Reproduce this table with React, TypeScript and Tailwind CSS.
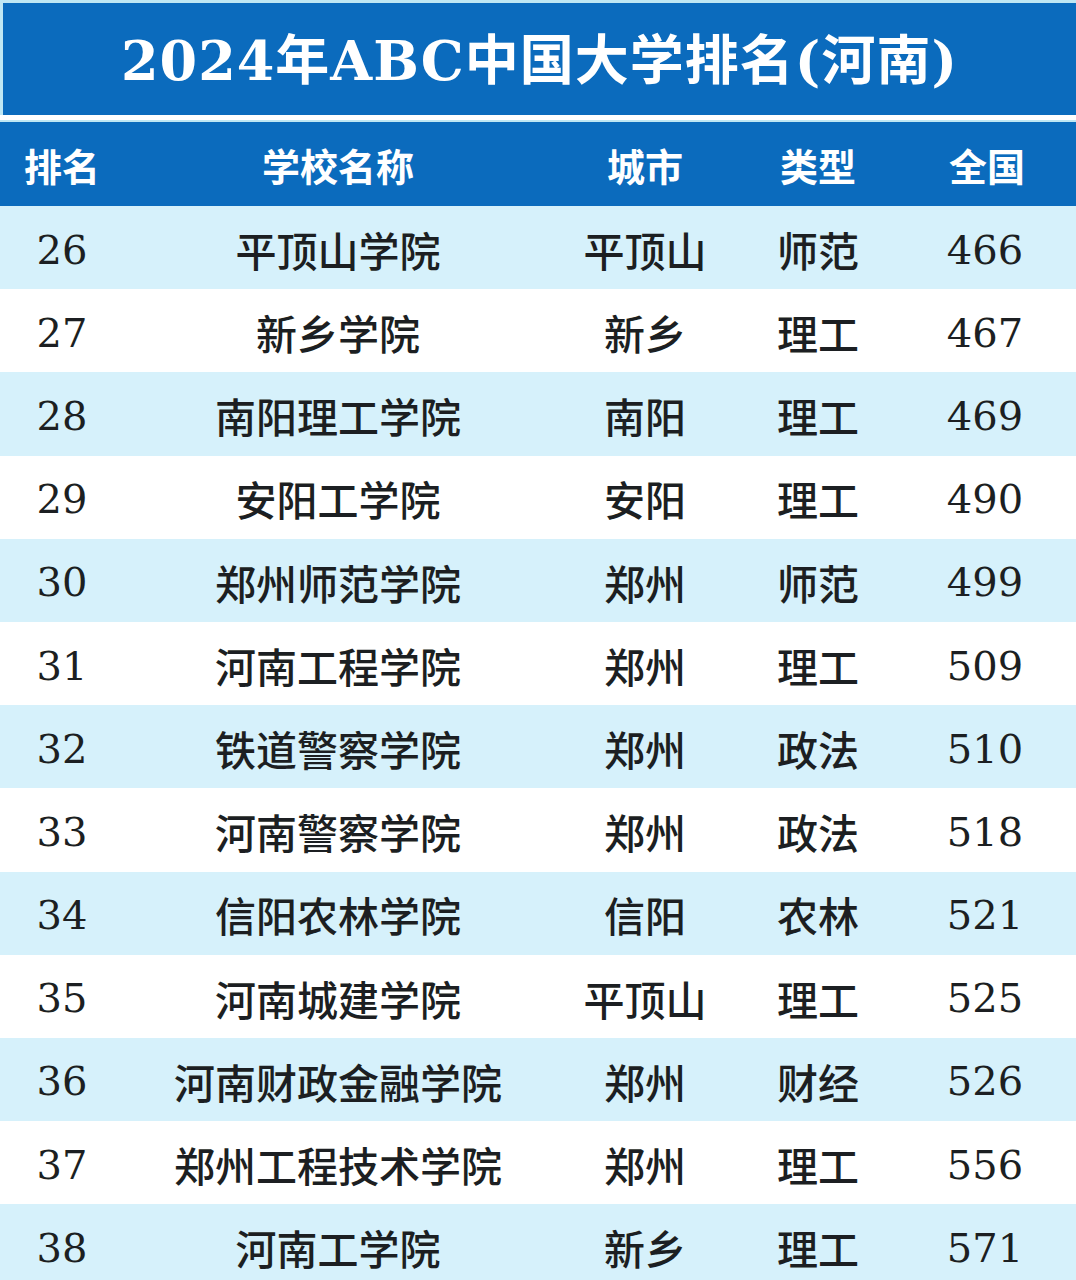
const rows: [string, string, string, string, string][] = [
  ['26', '平顶山学院', '平顶山', '师范', '466'],
  ['27', '新乡学院', '新乡', '理工', '467'],
  ['28', '南阳理工学院', '南阳', '理工', '469'],
  ['29', '安阳工学院', '安阳', '理工', '490'],
  ['30', '郑州师范学院', '郑州', '师范', '499'],
  ['31', '河南工程学院', '郑州', '理工', '509'],
  ['32', '铁道警察学院', '郑州', '政法', '510'],
  ['33', '河南警察学院', '郑州', '政法', '518'],
  ['34', '信阳农林学院', '信阳', '农林', '521'],
  ['35', '河南城建学院', '平顶山', '理工', '525'],
  ['36', '河南财政金融学院', '郑州', '财经', '526'],
  ['37', '郑州工程技术学院', '郑州', '理工', '556'],
  ['38', '河南工学院', '新乡', '理工', '571'],
];

const headers = ['排名', '学校名称', '城市', '类型', '全国'];

// column widths add up to the 1076px page
const cols = 'grid grid-cols-[124px_428px_186px_160px_178px]';

const serif = "font-['DejaVu_Serif','Noto_Sans_CJK_SC',serif]";
const cjk = "font-['Noto_Sans_CJK_SC',sans-serif]";

export default function App() {
  return (
    <div className="w-[1076px] h-[1280px] overflow-hidden bg-white">
      {/* Title */}
      <div className="border-t-[3px] border-l-[3px] border-[#bfe7f4] bg-[#0b6bbd] h-[115px] flex items-center justify-center">
        <h1 className={`${serif} text-white text-[54px] font-bold tracking-[1px] pt-1`}>
          2024年ABC中国大学排名(河南)
        </h1>
      </div>

      {/* Gap */}
      <div className="h-[7px] bg-white border-b-2 border-[#bfe7f4]" />

      {/* Header */}
      <div className={`${cols} h-[84px] bg-[#0b6bbd] items-center text-white text-[38px] font-bold ${cjk}`}>
        {headers.map((h) => (
          <div key={h} className="text-center">
            {h}
          </div>
        ))}
      </div>

      {/* Rows */}
      {rows.map((r, i) => (
        <div
          key={r[0]}
          className={`${cols} h-[83.2px] items-center pt-1 text-[#1c1f22] ${
            i % 2 === 0 ? 'bg-[#d6f1fb]' : 'bg-white'
          }`}
        >
          <div className={`text-center text-[40px] ${serif}`}>{r[0]}</div>
          <div className={`text-center text-[41px] font-medium ${cjk}`}>{r[1]}</div>
          <div className={`text-center text-[41px] font-medium ${cjk}`}>{r[2]}</div>
          <div className={`text-center text-[41px] font-medium ${cjk}`}>{r[3]}</div>
          <div className={`text-center text-[40px] pr-1 ${serif}`}>{r[4]}</div>
        </div>
      ))}
    </div>
  );
}
